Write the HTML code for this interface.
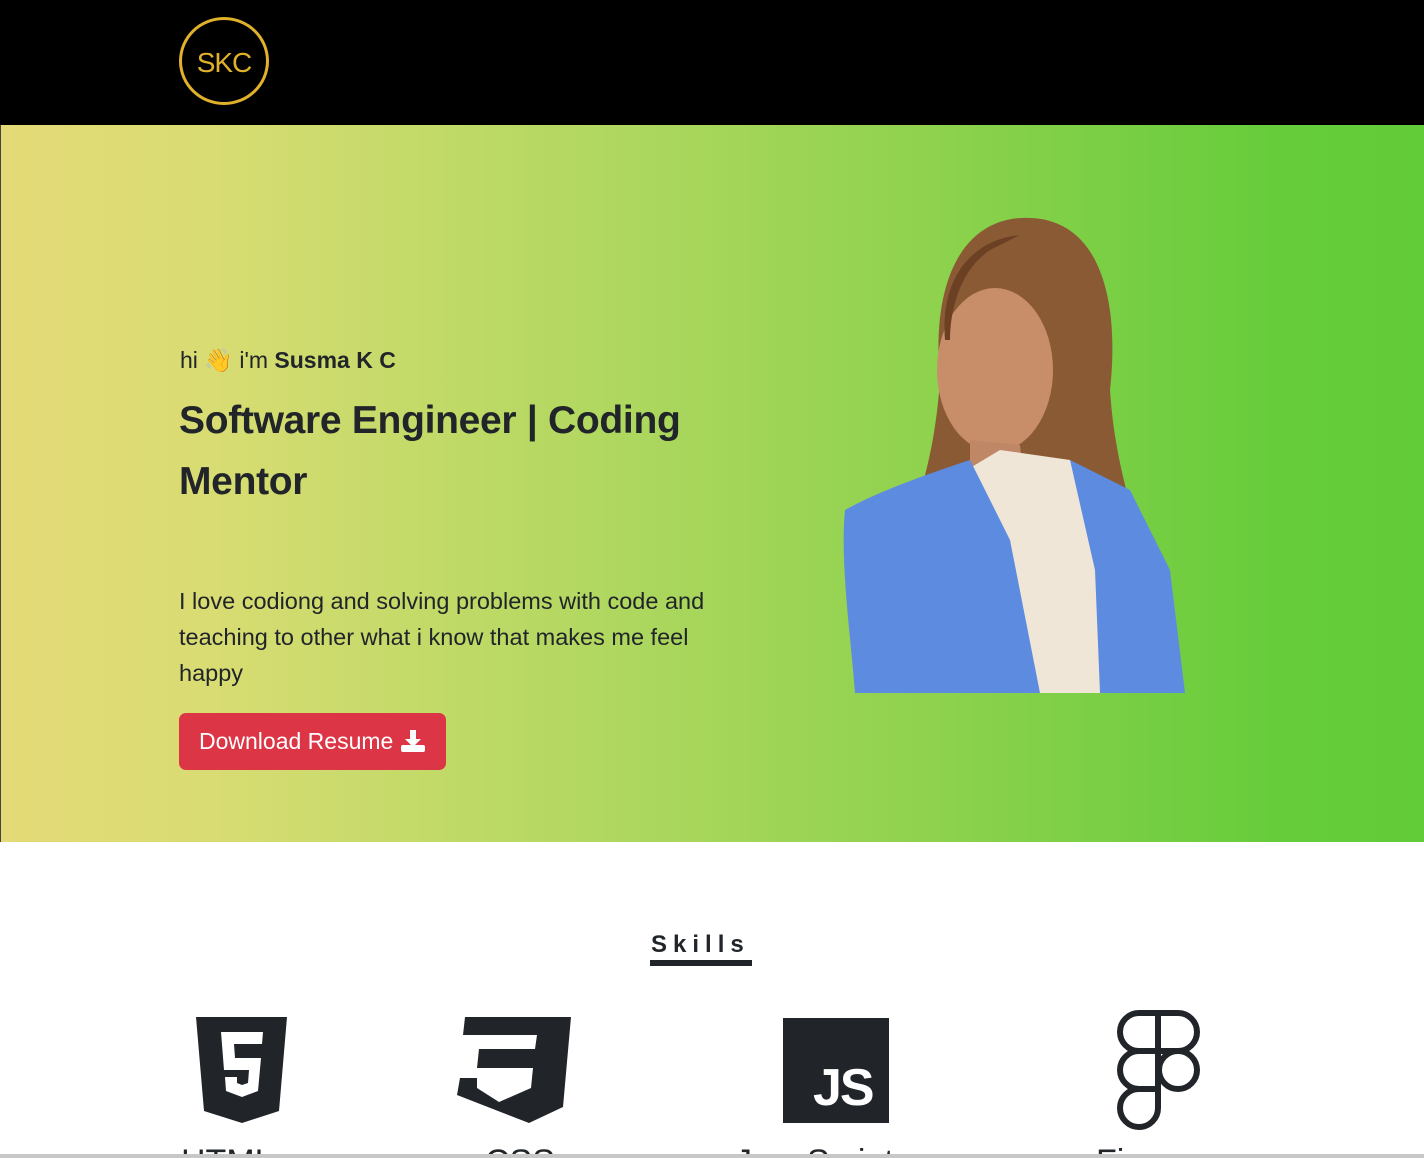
<!DOCTYPE html>
<html><head><meta charset="utf-8">
<style>
*{margin:0;padding:0;box-sizing:border-box}
html,body{width:1424px;height:1158px;overflow:hidden}
body{background:#fff;font-family:"Liberation Sans",sans-serif;color:#212529;position:relative}
.clip{position:absolute;left:0;top:0;width:1424px;height:1154px;overflow:hidden}
.nav{position:absolute;left:0;top:0;width:1424px;height:125px;background:#000}
.logo{position:absolute;left:179px;top:17px;width:90px;height:88px;border:3px solid #e1b12c;border-radius:50%;color:#e1b12c;font-size:28px;text-align:center;line-height:86px;letter-spacing:-1px}
.hero{position:absolute;left:0;top:125px;width:1424px;height:717px;background:linear-gradient(90deg,#e4da77 0%,#d8dc72 15%,#b4d862 40%,#8fd24e 65%,#66cc3a 90%,#62cb38 100%);border-left:1px solid #444}
.hi{position:absolute;left:180px;top:347px;font-size:23px}
h1{position:absolute;left:179px;top:390px;font-size:39px;line-height:61px;font-weight:bold;width:580px;letter-spacing:-.3px}
.p{position:absolute;left:179px;top:583px;font-size:23.5px;line-height:36px;width:548px}
.btn{position:absolute;left:179px;top:713px;width:267px;height:57px;background:#dc3545;border-radius:7px;color:#fff;font-size:23px;line-height:57px;padding-left:20px}
.skills{position:absolute;left:651px;top:931px;font-size:24px;font-weight:bold;letter-spacing:6px;color:#212529}
.ul{position:absolute;left:650px;top:960px;width:102px;height:6px;background:#212529}
.lab{position:absolute;top:1143px;font-size:34px;color:#212529}
.bot{position:absolute;left:0;top:1154px;width:1424px;height:4px;background:#c8c8c8}
</style></head><body>
<div class="clip">
<div class="nav"><div class="logo">SKC</div></div>
<div class="hero"></div>
<div class="hi">hi <span>👋</span> i'm <b>Susma K C</b></div>
<h1>Software Engineer | Coding Mentor</h1>
<div class="p">I love codiong and solving problems with code and teaching to other what i know that makes me feel happy</div>
<div class="btn">Download Resume <svg width="26" height="24" viewBox="0 0 26 24" style="vertical-align:-3px"><path d="M10 2h6v9h5l-8 8-8-8h5z" fill="#fff"/><rect x="1" y="17" width="24" height="7" rx="2" fill="#fff"/></svg></div>
<svg style="position:absolute;left:840px;top:210px" width="360" height="485" viewBox="0 0 360 485">
<path d="M100 170 C90 60 130 5 190 8 C260 10 280 90 270 180 C275 260 300 330 320 380 L330 483 L20 483 L50 350 C80 300 95 240 100 170Z" fill="#8a5a35"/>
<ellipse cx="155" cy="160" rx="58" ry="82" fill="#c88e6a"/>
<path d="M130 230 L180 235 L185 280 L130 280Z" fill="#c08766"/>
<path d="M110 270 L160 240 L230 250 L300 330 L310 483 L60 483 Z" fill="#efe6d8"/>
<path d="M5 300 C40 280 100 260 130 250 L170 330 L200 483 L15 483 C10 420 0 350 5 300Z" fill="#5d8be0"/>
<path d="M230 250 L290 280 L330 360 L345 483 L260 483 L255 360Z" fill="#5d8be0"/>
<path d="M150 40 C120 60 110 100 110 130 L105 130 C100 70 130 30 180 25Z" fill="#6b4023"/>
</svg>
<div class="skills">Skills</div><div class="ul"></div>
<svg style="position:absolute;left:196px;top:1017px" width="92" height="106" viewBox="0 0 92 106"><path d="M0 0h91l-8 94-37 12-38-12z" fill="#212529"/><path d="M25 15h42l-1 12H38l1 14h26l-3 33-16 6-16-6-1-14h12v6l5 2 6-2 1-13H28z" fill="#fff"/></svg>
<svg style="position:absolute;left:457px;top:1017px" width="114" height="106" viewBox="0 0 114 106"><path d="M8 0h106l-8 90-34 16L0 78 3 61h17v10l22 14 32-14 2-20H20l2-19h56l2-14H6z" fill="#212529"/></svg>
<div style="position:absolute;left:783px;top:1018px;width:106px;height:105px;background:#212529"><span style="position:absolute;left:30px;top:40px;color:#fff;font-weight:bold;font-size:52px;letter-spacing:-2px">JS</span></div>
<svg style="position:absolute;left:1116px;top:1010px" width="86" height="122" viewBox="0 0 86 122"><g fill="none" stroke="#212529" stroke-width="6"><path d="M42 3H23a19 19 0 0 0 0 38h19zM42 3h20a19 19 0 0 1 0 38H42z"/><path d="M42 41H23a19 19 0 0 0 0 38h19z"/><circle cx="62" cy="60" r="19"/><path d="M42 79H23a19 19 0 1 0 19 19z"/></g></svg>
<div class="lab" style="left:181px">HTML</div>
<div class="lab" style="left:485px">CSS</div>
<div class="lab" style="left:735px">JavaScript</div>
<div class="lab" style="left:1096px">Figma</div>
</div>
<div class="bot"></div>
</body></html>
